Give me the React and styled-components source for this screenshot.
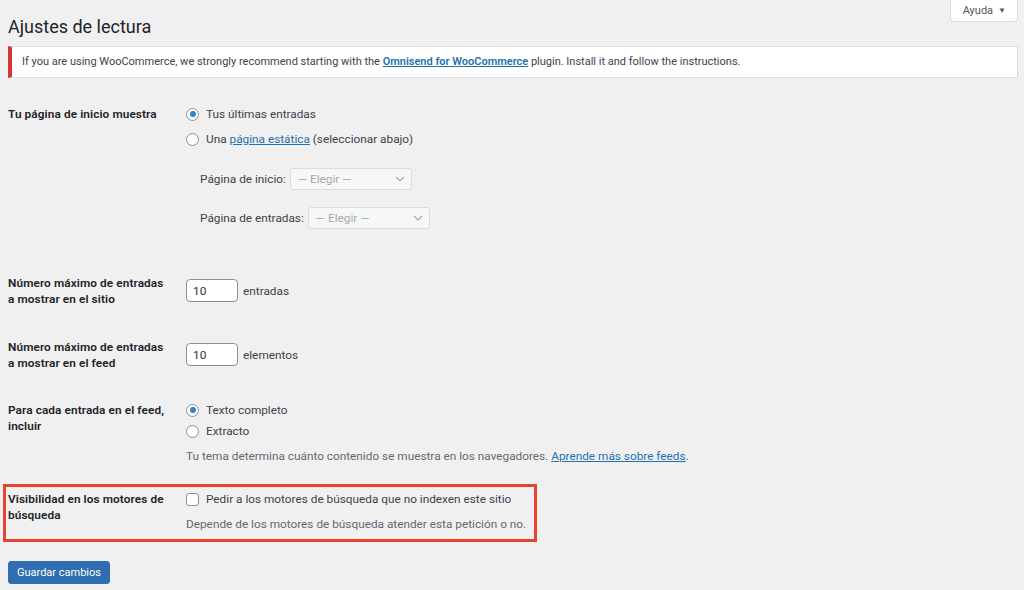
import React from "react";
import styled, { createGlobalStyle } from "styled-components";

const Global = createGlobalStyle`
  html, body { margin: 0; padding: 0; background: #f0f0f1; }
  body { font-family: Roboto, "Liberation Sans", Arial, sans-serif; font-size: 11px; color: #3c434a; }
  * { box-sizing: border-box; }
`;

const Page = styled.div`
  width: 1024px;
  min-height: 590px;
  padding: 0 6px 0 8px;
`;

const Header = styled.div`
  display: flex;
  justify-content: space-between;
  align-items: flex-start;
`;

const Title = styled.h1`
  margin: 0;
  padding-top: 14px;
  font-size: 18px;
  line-height: 26px;
  font-weight: 400;
  color: #1d2327;
`;

const HelpButton = styled.button`
  height: 22px;
  padding: 0 11px 0 12px;
  background: #fff;
  border: 1px solid #dcdcde;
  border-top: none;
  border-radius: 0 0 4px 4px;
  font: inherit;
  font-size: 11px;
  color: #50575e;
  display: flex;
  align-items: center;
  gap: 5px;
`;

const Caret = styled.span`
  font-size: 8px;
  color: #50575e;
`;

const Notice = styled.div`
  margin-top: 6px;
  height: 32px;
  background: #fff;
  border: 1px solid #dcdcde;
  border-left: 4px solid #d63638;
  padding: 0 10px;
  display: flex;
  align-items: center;
  color: #3c434a;
  line-height: 16px;
`;

const Link = styled.a`
  color: #2271b1;
  text-decoration: underline;
  font-weight: ${(p) => (p.$bold ? 600 : 400)};
`;

const Form = styled.div`
  font-size: 11.8px;
`;

const Row = styled.div`
  display: grid;
  grid-template-columns: 178px 1fr;
  align-items: start;
  margin-top: ${(p) => p.$gap}px;
`;

const Th = styled.div`
  font-weight: 600;
  color: #1d2327;
  line-height: 16px;
  letter-spacing: 0.1px;
  padding-right: 8px;
`;

const Td = styled.div`
  display: flex;
  flex-direction: column;
  align-items: flex-start;
`;

const Choice = styled.label`
  display: flex;
  align-items: center;
  gap: 7px;
  height: 16px;
  line-height: 16px;
  color: #3c434a;
  margin-top: ${(p) => p.$gap || 0}px;
`;

const RadioCircle = styled.span`
  width: 13px;
  height: 13px;
  border-radius: 50%;
  border: 1px solid #8c8f94;
  background: #fff;
  display: flex;
  align-items: center;
  justify-content: center;
  flex-shrink: 0;
  &::after {
    content: "";
    width: 6px;
    height: 6px;
    border-radius: 50%;
    background: ${(p) => (p.$checked ? "#3582c4" : "transparent")};
  }
`;

const CheckBox = styled.span`
  width: 13px;
  height: 13px;
  border-radius: 3px;
  border: 1px solid #8c8f94;
  background: #fff;
  flex-shrink: 0;
`;

const SubField = styled.div`
  display: flex;
  align-items: center;
  gap: 4px;
  padding-left: 14px;
  margin-top: ${(p) => p.$gap}px;
  color: #3c434a;
`;

const Select = styled.div`
  width: 122px;
  height: 22px;
  border: 1px solid #dcdcde;
  border-radius: 3px;
  background: #f6f7f7;
  color: #a7aaad;
  display: flex;
  align-items: center;
  justify-content: space-between;
  padding: 0 6px 0 7px;
`;

const Inline = styled.div`
  display: flex;
  align-items: center;
  gap: 5px;
  margin-top: 4px;
  color: #3c434a;
`;

const NumberInput = styled.div`
  width: 52px;
  height: 23px;
  border: 1px solid #8c8f94;
  border-radius: 4px;
  background: #fff;
  color: #2c3338;
  display: flex;
  align-items: center;
  padding-left: 6px;
`;

const Description = styled.p`
  margin: ${(p) => p.$gap}px 0 0;
  line-height: 16px;
  color: #646970;
`;

const Highlight = styled.div`
  width: 534px;
  margin-left: -5px;
  margin-top: 20px;
  border: 3px solid #e5432f;
  padding: 4px 0 7px 2px;
`;

const SubmitButton = styled.button`
  margin-top: 19px;
  height: 23px;
  padding: 0 8px;
  background: #2f6db0;
  border: 1px solid #2f6db0;
  border-radius: 3px;
  color: #fff;
  font: inherit;
  font-size: 11px;
`;

const Chevron = () => (
  <svg width="10" height="6" viewBox="0 0 10 6">
    <polyline points="1,1 5,5 9,1" fill="none" stroke="#a7aaad" strokeWidth="1.2" />
  </svg>
);

export default function App() {
  return (
    <Page>
      <Global />
      <Header>
        <Title>Ajustes de lectura</Title>
        <HelpButton>
          Ayuda <Caret>▼</Caret>
        </HelpButton>
      </Header>
      <Notice>
        <span>
          If you are using WooCommerce, we strongly recommend starting with the{" "}
          <Link $bold href="#">Omnisend for WooCommerce</Link> plugin. Install it and follow the instructions.
        </span>
      </Notice>

      <Form>
        <Row $gap={28}>
          <Th>Tu página de inicio muestra</Th>
          <Td>
            <Choice>
              <RadioCircle $checked />
              Tus últimas entradas
            </Choice>
            <Choice $gap={9}>
              <RadioCircle />
              <span>
                Una <Link href="#">página estática</Link> (seleccionar abajo)
              </span>
            </Choice>
            <SubField $gap={21}>
              Página de inicio:
              <Select>
                — Elegir — <Chevron />
              </Select>
            </SubField>
            <SubField $gap={17}>
              Página de entradas:
              <Select>
                — Elegir — <Chevron />
              </Select>
            </SubField>
          </Td>
        </Row>

        <Row $gap={46}>
          <Th>
            Número máximo de entradas
            <br />a mostrar en el sitio
          </Th>
          <Td>
            <Inline>
              <NumberInput>10</NumberInput>
              entradas
            </Inline>
          </Td>
        </Row>

        <Row $gap={32}>
          <Th>
            Número máximo de entradas
            <br />a mostrar en el feed
          </Th>
          <Td>
            <Inline>
              <NumberInput>10</NumberInput>
              elementos
            </Inline>
          </Td>
        </Row>

        <Row $gap={31}>
          <Th>
            Para cada entrada en el feed,
            <br />
            incluir
          </Th>
          <Td>
            <Choice>
              <RadioCircle $checked />
              Texto completo
            </Choice>
            <Choice $gap={5}>
              <RadioCircle />
              Extracto
            </Choice>
            <Description $gap={9}>
              Tu tema determina cuánto contenido se muestra en los navegadores.{" "}
              <Link href="#">Aprende más sobre feeds</Link>.
            </Description>
          </Td>
        </Row>

        <Highlight>
          <Row $gap={0}>
            <Th>
              Visibilidad en los motores de
              <br />
              búsqueda
            </Th>
            <Td>
              <Choice>
                <CheckBox />
                Pedir a los motores de búsqueda que no indexen este sitio
              </Choice>
              <Description $gap={9}>
                Depende de los motores de búsqueda atender esta petición o no.
              </Description>
            </Td>
          </Row>
        </Highlight>
      </Form>

      <SubmitButton>Guardar cambios</SubmitButton>
    </Page>
  );
}
